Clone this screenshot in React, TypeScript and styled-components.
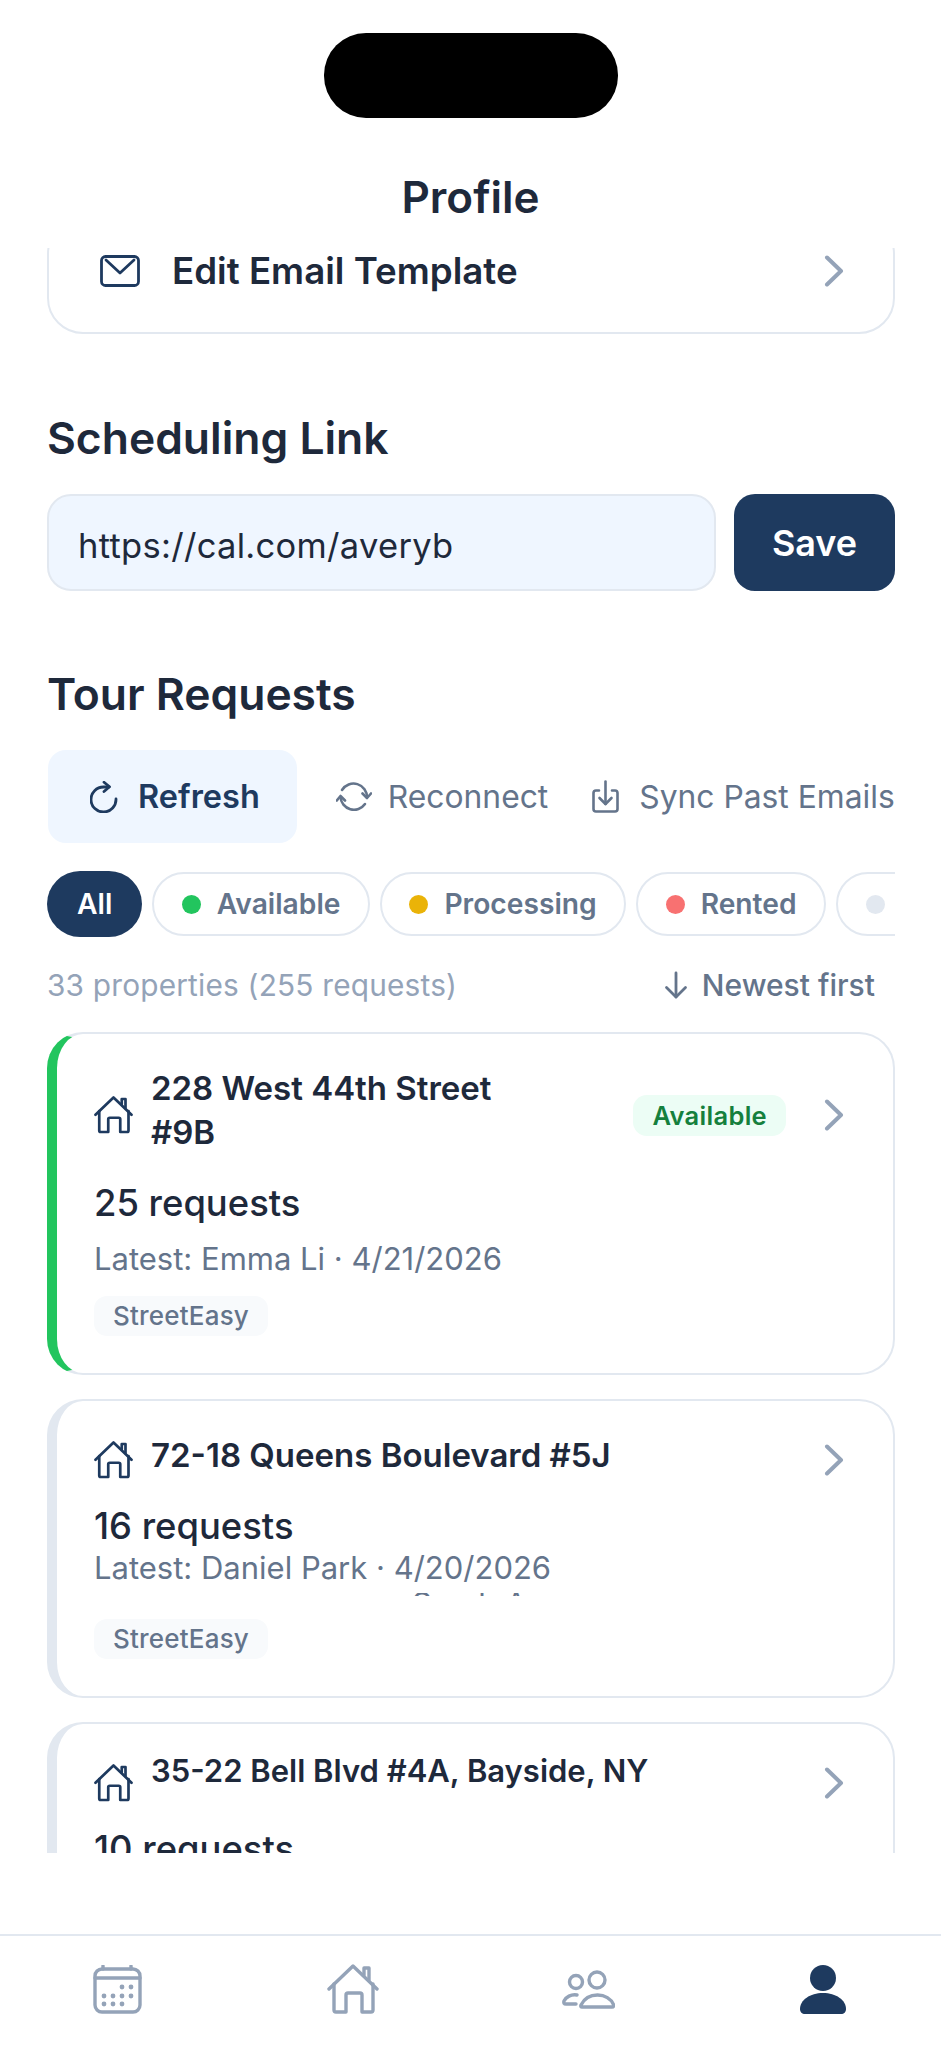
import React, { FC } from 'react';
import styled, { createGlobalStyle } from 'styled-components';

const GlobalStyle = createGlobalStyle`
  html, body {
    margin: 0;
    padding: 0;
    background: #ffffff;
    font-family: Inter, "Liberation Sans", sans-serif;
  }
`;

const NAVY = '#1e3a5f';
const INK = '#1e293b';
const SLATE = '#64748b';
const MUTED = '#94a3b8';
const LINE = '#e2e8f0';

const Screen = styled.div`
  width: 941px;
  height: 2048px;
  display: flex;
  flex-direction: column;
  overflow: hidden;
  background: #ffffff;
`;

const Header = styled.header`
  height: 248px;
  flex: none;
  display: flex;
  flex-direction: column;
  align-items: center;
  padding-top: 33px;
  box-sizing: border-box;
`;

const Notch = styled.div`
  width: 294px;
  height: 85px;
  border-radius: 42px;
  background: #000000;
`;

const ScreenTitle = styled.h1`
  margin: 53px 0 0;
  font-size: 44px;
  line-height: 52px;
  font-weight: 600;
  color: ${INK};
`;

const Scroller = styled.main`
  height: 1605px;
  flex: none;
  margin: 0 46px 0 47px;
  overflow: hidden;
`;

const SettingsCard = styled.div`
  margin-top: -30px;
  padding: 29px 49px 39px 51px;
  display: flex;
  align-items: center;
  border: 2.5px solid ${LINE};
  border-radius: 36px;
`;

const SettingsLabel = styled.span`
  flex: 1;
  margin-left: 32px;
  font-size: 36.7px;
  line-height: 44px;
  font-weight: 600;
  color: ${INK};
`;

const SectionTitle = styled.h2<{ $top: number }>`
  margin: ${(p) => p.$top}px 0 0;
  font-size: 44.4px;
  line-height: 52px;
  font-weight: 600;
  color: ${INK};
`;

const LinkRow = styled.div`
  margin-top: 30px;
  display: flex;
  gap: 18px;
  height: 97px;
`;

const LinkInput = styled.div`
  flex: 1;
  display: flex;
  align-items: center;
  padding: 6px 0 0 29px;
  background: #eff6ff;
  border: 2.5px solid ${LINE};
  border-radius: 24px;
  font-size: 34.5px;
  letter-spacing: 0.3px;
  color: ${INK};
`;

const SaveButton = styled.button`
  width: 161px;
  padding: 0;
  border: none;
  border-radius: 21px;
  background: ${NAVY};
  color: #ffffff;
  font-family: inherit;
  font-size: 36px;
  font-weight: 600;
`;

const Toolbar = styled.div`
  margin-top: 30px;
  display: flex;
  align-items: center;
  height: 93px;
  white-space: nowrap;
`;

const ToolButton = styled.div<{ $gap: number; $active?: boolean }>`
  flex: none;
  height: 93px;
  display: flex;
  align-items: center;
  gap: ${(p) => p.$gap}px;
  box-sizing: border-box;
  font-size: ${(p) => (p.$active ? 32.5 : 31.8)}px;
  font-weight: ${(p) => (p.$active ? 600 : 400)};
  color: ${(p) => (p.$active ? NAVY : SLATE)};
  background: ${(p) => (p.$active ? '#eff6ff' : 'transparent')};
  border-radius: 18px;
  padding: ${(p) => (p.$active ? '0 37px 0 42px' : '0')};
  margin-left: ${(p) => (p.$active ? '1px' : '0')};
  & + & {
    margin-left: 39px;
  }
  & + & + & {
    margin-left: 44px;
  }
`;

const Chips = styled.div`
  margin-top: 28px;
  display: flex;
  align-items: center;
  gap: 10px;
  overflow: hidden;
  height: 66px;
`;

const Chip = styled.div<{ $active?: boolean }>`
  flex: none;
  display: flex;
  align-items: center;
  gap: 16px;
  box-sizing: border-box;
  height: ${(p) => (p.$active ? 66 : 64)}px;
  padding: 0 ${(p) => (p.$active ? 30 : 27.5)}px;
  border: ${(p) => (p.$active ? 'none' : `2.5px solid ${LINE}`)};
  border-radius: 33px;
  background: ${(p) => (p.$active ? NAVY : '#ffffff')};
  color: ${(p) => (p.$active ? '#ffffff' : SLATE)};
  font-size: 28.2px;
  font-weight: 600;
`;

const Dot = styled.span<{ $color: string }>`
  width: 19px;
  height: 19px;
  border-radius: 50%;
  background: ${(p) => p.$color};
`;

const MetaRow = styled.div`
  margin-top: 28px;
  height: 40px;
  display: flex;
  align-items: center;
  justify-content: space-between;
  padding: 0 20px 0 0;
`;

const MetaCount = styled.span`
  font-size: 29.8px;
  color: ${MUTED};
  letter-spacing: 0.2px;
`;

const SortLabel = styled.span`
  display: flex;
  align-items: center;
  gap: 14px;
  font-size: 30px;
  font-weight: 500;
  color: ${SLATE};
`;

const CardList = styled.div`
  margin-top: 27px;
  display: flex;
  flex-direction: column;
  gap: 24px;
`;

const Card = styled.article<{ $accent: string }>`
  box-sizing: border-box;
  padding: 32px 49px 37px 37px;
  border: 2.5px solid ${LINE};
  border-left: 10px solid ${(p) => p.$accent};
  border-radius: 36px;
  flex: none;
`;

const CardHead = styled.div<{ $rowHeight: number }>`
  display: flex;
  align-items: center;
  min-height: ${(p) => p.$rowHeight}px;
`;

const HomeSlot = styled.span`
  flex: none;
  width: 39px;
  height: 38px;
  display: flex;
  margin-right: 18px;
`;

const Address = styled.div<{ $lift?: number; $size?: number; $reserve?: number }>`
  flex: 1;
  align-self: flex-start;
  margin-top: ${(p) => -(p.$lift ?? 0)}px;
  padding-right: ${(p) => p.$reserve ?? 0}px;
  font-size: ${(p) => p.$size ?? 33}px;
  line-height: 44px;
  font-weight: 600;
  color: ${INK};
`;

const StatusBadge = styled.span`
  flex: none;
  height: 41px;
  margin-right: 38px;
  padding: 0 19px;
  display: flex;
  align-items: center;
  border-radius: 14px;
  background: #ecfdf5;
  color: #15803d;
  font-size: 25.5px;
  font-weight: 600;
  letter-spacing: 0.3px;
`;

const RequestCount = styled.div<{ $top: number }>`
  margin-top: ${(p) => p.$top}px;
  font-size: 36.4px;
  line-height: 44px;
  font-weight: 500;
  color: ${INK};
`;

const Latest = styled.div<{ $top: number }>`
  margin-top: ${(p) => p.$top}px;
  font-size: 31px;
  line-height: 38px;
  color: ${SLATE};
`;

const ClippedLine = styled.div`
  height: 3px;
  margin-top: 6px;
  padding-left: 318px;
  overflow: hidden;
  font-size: 31px;
  line-height: 38px;
  color: ${SLATE};
  & > span {
    display: block;
    margin-top: -8px;
  }
`;

const SourceTag = styled.span<{ $top: number }>`
  display: inline-block;
  margin-top: ${(p) => p.$top}px;
  padding: 0 19px;
  height: 40px;
  line-height: 40px;
  border-radius: 13px;
  background: #f8fafc;
  color: ${SLATE};
  font-size: 26px;
  font-weight: 500;
  letter-spacing: 0.2px;
`;

const BottomNav = styled.nav`
  margin-top: 81px;
  flex: 1;
  display: grid;
  grid-template-columns: repeat(4, 1fr);
  align-items: center;
  border-top: 2px solid ${LINE};
  padding-bottom: 6px;
`;

const NavItem = styled.div`
  display: flex;
  justify-content: center;
`;

const Chevron: FC = () => (
  <svg width="20" height="32" viewBox="0 0 20 32" fill="none" stroke={MUTED} strokeWidth="4" strokeLinecap="round" strokeLinejoin="round">
    <path d="M3 2.5 L17 16 L3 29.5" />
  </svg>
);

const MailIcon: FC = () => (
  <svg width="40" height="32" viewBox="0 0 40 32" fill="none" stroke={NAVY} strokeWidth="2.8" strokeLinecap="round" strokeLinejoin="round">
    <rect x="1.5" y="1.5" width="37" height="29" rx="4" />
    <path d="M6 5 L20 18 L34 5" />
  </svg>
);

const RefreshIcon: FC = () => (
  <svg width="28" height="32" viewBox="0 0 28 32" fill="none" stroke={NAVY} strokeWidth="2.8" strokeLinecap="round" strokeLinejoin="round">
    <path d="M26 18 A12.5 12.5 0 1 1 13.5 6 H19" />
    <path d="M14 1.2 L19.5 5.8 L14 10.5" />
  </svg>
);

const ReconnectIcon: FC = () => (
  <svg width="36" height="32" viewBox="0 0 36 32" fill="none" stroke={SLATE} strokeWidth="2.6" strokeLinecap="round" strokeLinejoin="round">
    <path d="M6 9 A13.5 13.5 0 0 1 31 16.5" />
    <path d="M26.5 12.5 L31 17 L35 12.5" />
    <path d="M4.5 16 A13.5 13.5 0 0 0 29 23" />
    <path d="M0.8 19.5 L4.5 15 L9 19.5" />
  </svg>
);

const SyncIcon: FC = () => (
  <svg width="27" height="33" viewBox="0 0 27 33" fill="none" stroke={SLATE} strokeWidth="2.6" strokeLinecap="round" strokeLinejoin="round">
    <path d="M7 10.5 H4 a2.5 2.5 0 0 0 -2.5 2.5 V29 a2.5 2.5 0 0 0 2.5 2.5 H23 a2.5 2.5 0 0 0 2.5 -2.5 V13 a2.5 2.5 0 0 0 -2.5 -2.5 H20" />
    <path d="M13.5 1.5 V24" />
    <path d="M7.5 18 L13.5 24 L19.5 18" />
  </svg>
);

const SortArrow: FC = () => (
  <svg width="24" height="28" viewBox="0 0 24 28" fill="none" stroke={SLATE} strokeWidth="2.8" strokeLinecap="round" strokeLinejoin="round">
    <path d="M12 2 V26" />
    <path d="M2.5 16.5 L12 26 L21.5 16.5" />
  </svg>
);

const HomePaths: FC = () => (
  <>
    <path d="M2 25 L26 2 L50 25" />
    <path d="M7 20 V46 a2 2 0 0 0 2 2 H19 V31 a2 2 0 0 1 2 -2 H33 a2 2 0 0 1 2 2 V48 H44 a2 2 0 0 0 2 -2 V20" />
    <path d="M37 11 V4 H42 V16" />
  </>
);

const CardHome: FC = () => (
  <svg width="39" height="37.5" viewBox="0 0 52 50" fill="none" stroke={NAVY} strokeWidth="3.6" strokeLinecap="round" strokeLinejoin="round">
    <HomePaths />
  </svg>
);

const NavCalendar: FC = () => {
  const dots = [
    [29, 22], [38, 22],
    [11, 31], [20, 31], [29, 31], [38, 31],
    [11, 39], [20, 39], [29, 39],
  ];
  return (
    <svg width="49" height="49" viewBox="0 0 49 49" fill="none" stroke={MUTED} strokeWidth="3.4" strokeLinecap="round">
      <rect x="2" y="4" width="45" height="43" rx="7" />
      <path d="M2 13 H47 M10 1 V4 M38 1 V4" />
      {dots.map(([x, y]) => (
        <circle key={`${x}-${y}`} cx={x} cy={y} r="2.4" fill={MUTED} stroke="none" />
      ))}
    </svg>
  );
};

const NavHome: FC = () => (
  <svg width="52" height="50" viewBox="0 0 52 50" fill="none" stroke={MUTED} strokeWidth="3.4" strokeLinecap="round" strokeLinejoin="round">
    <HomePaths />
  </svg>
);

const NavPeople: FC = () => (
  <svg width="53" height="39" viewBox="0 0 53 39" fill="none" stroke={MUTED} strokeWidth="3.4" strokeLinecap="round" strokeLinejoin="round">
    <circle cx="14" cy="12" r="6.5" />
    <circle cx="35" cy="10" r="8" />
    <path d="M20 37 H50 c1.5 0 2 -1 1.5 -2.5 C49 29 43 25 35.5 25 S22 29 19 35 c-.5 1.5 0 2 1 2z" />
    <path d="M15 25 C9 24 4 27 2 31 C1.5 33 2 34 4 34 H14" />
  </svg>
);

const NavPerson: FC = () => (
  <svg width="46" height="49" viewBox="0 0 46 49" fill={NAVY}>
    <circle cx="23" cy="13" r="13" />
    <path d="M0 44 C0 35 10 28 23 28 S46 35 46 44 C46 47 44 49 41 49 H5 C2 49 0 47 0 44z" />
  </svg>
);

const App: FC = () => {
  return (
    <Screen>
      <GlobalStyle />
      <Header>
        <Notch />
        <ScreenTitle>Profile</ScreenTitle>
      </Header>

      <Scroller>
        <SettingsCard>
          <MailIcon />
          <SettingsLabel>Edit Email Template</SettingsLabel>
          <Chevron />
        </SettingsCard>

        <SectionTitle $top={78}>Scheduling Link</SectionTitle>
        <LinkRow>
          <LinkInput>https://cal.com/averyb</LinkInput>
          <SaveButton>Save</SaveButton>
        </LinkRow>

        <SectionTitle $top={77}>Tour Requests</SectionTitle>
        <Toolbar>
          <ToolButton $active $gap={20}>
            <RefreshIcon />
            Refresh
          </ToolButton>
          <ToolButton $gap={16}>
            <ReconnectIcon />
            Reconnect
          </ToolButton>
          <ToolButton $gap={20}>
            <SyncIcon />
            Sync Past Emails
          </ToolButton>
        </Toolbar>

        <Chips>
          <Chip $active>All</Chip>
          <Chip>
            <Dot $color="#22c55e" />
            Available
          </Chip>
          <Chip>
            <Dot $color="#eab308" />
            Processing
          </Chip>
          <Chip>
            <Dot $color="#f87171" />
            Rented
          </Chip>
          <Chip>
            <Dot $color={LINE} />
            Off Market
          </Chip>
        </Chips>

        <MetaRow>
          <MetaCount>33 properties (255 requests)</MetaCount>
          <SortLabel>
            <SortArrow />
            Newest first
          </SortLabel>
        </MetaRow>

        <CardList>
          <Card $accent="#22c55e">
            <CardHead $rowHeight={98}>
              <HomeSlot>
                <CardHome />
              </HomeSlot>
              <Address $reserve={70}>228 West 44th Street #9B</Address>
              <StatusBadge>Available</StatusBadge>
              <Chevron />
            </CardHead>
            <RequestCount $top={17}>25 requests</RequestCount>
            <Latest $top={15}>Latest: Emma Li · 4/21/2026</Latest>
            <SourceTag $top={18}>StreetEasy</SourceTag>
          </Card>

          <Card $accent={LINE}>
            <CardHead $rowHeight={54}>
              <HomeSlot>
                <CardHome />
              </HomeSlot>
              <Address>72-18 Queens Boulevard #5J</Address>
              <Chevron />
            </CardHead>
            <RequestCount $top={17}>16 requests</RequestCount>
            <Latest $top={1}>Latest: Daniel Park · 4/20/2026</Latest>
            <ClippedLine>
              <span>Sarah Ann</span>
            </ClippedLine>
            <SourceTag $top={23}>StreetEasy</SourceTag>
          </Card>

          <Card $accent={LINE}>
            <CardHead $rowHeight={54}>
              <HomeSlot>
                <CardHome />
              </HomeSlot>
              <Address $lift={7} $size={31}>
                35-22 Bell Blvd #4A, Bayside, NY
              </Address>
              <Chevron />
            </CardHead>
            <RequestCount $top={17}>10 requests</RequestCount>
            <Latest $top={1}>Latest: Sofia Reyes · 4/18/2026</Latest>
          </Card>
        </CardList>
      </Scroller>

      <BottomNav>
        <NavItem>
          <NavCalendar />
        </NavItem>
        <NavItem>
          <NavHome />
        </NavItem>
        <NavItem>
          <NavPeople />
        </NavItem>
        <NavItem>
          <NavPerson />
        </NavItem>
      </BottomNav>
    </Screen>
  );
};

export default App;
